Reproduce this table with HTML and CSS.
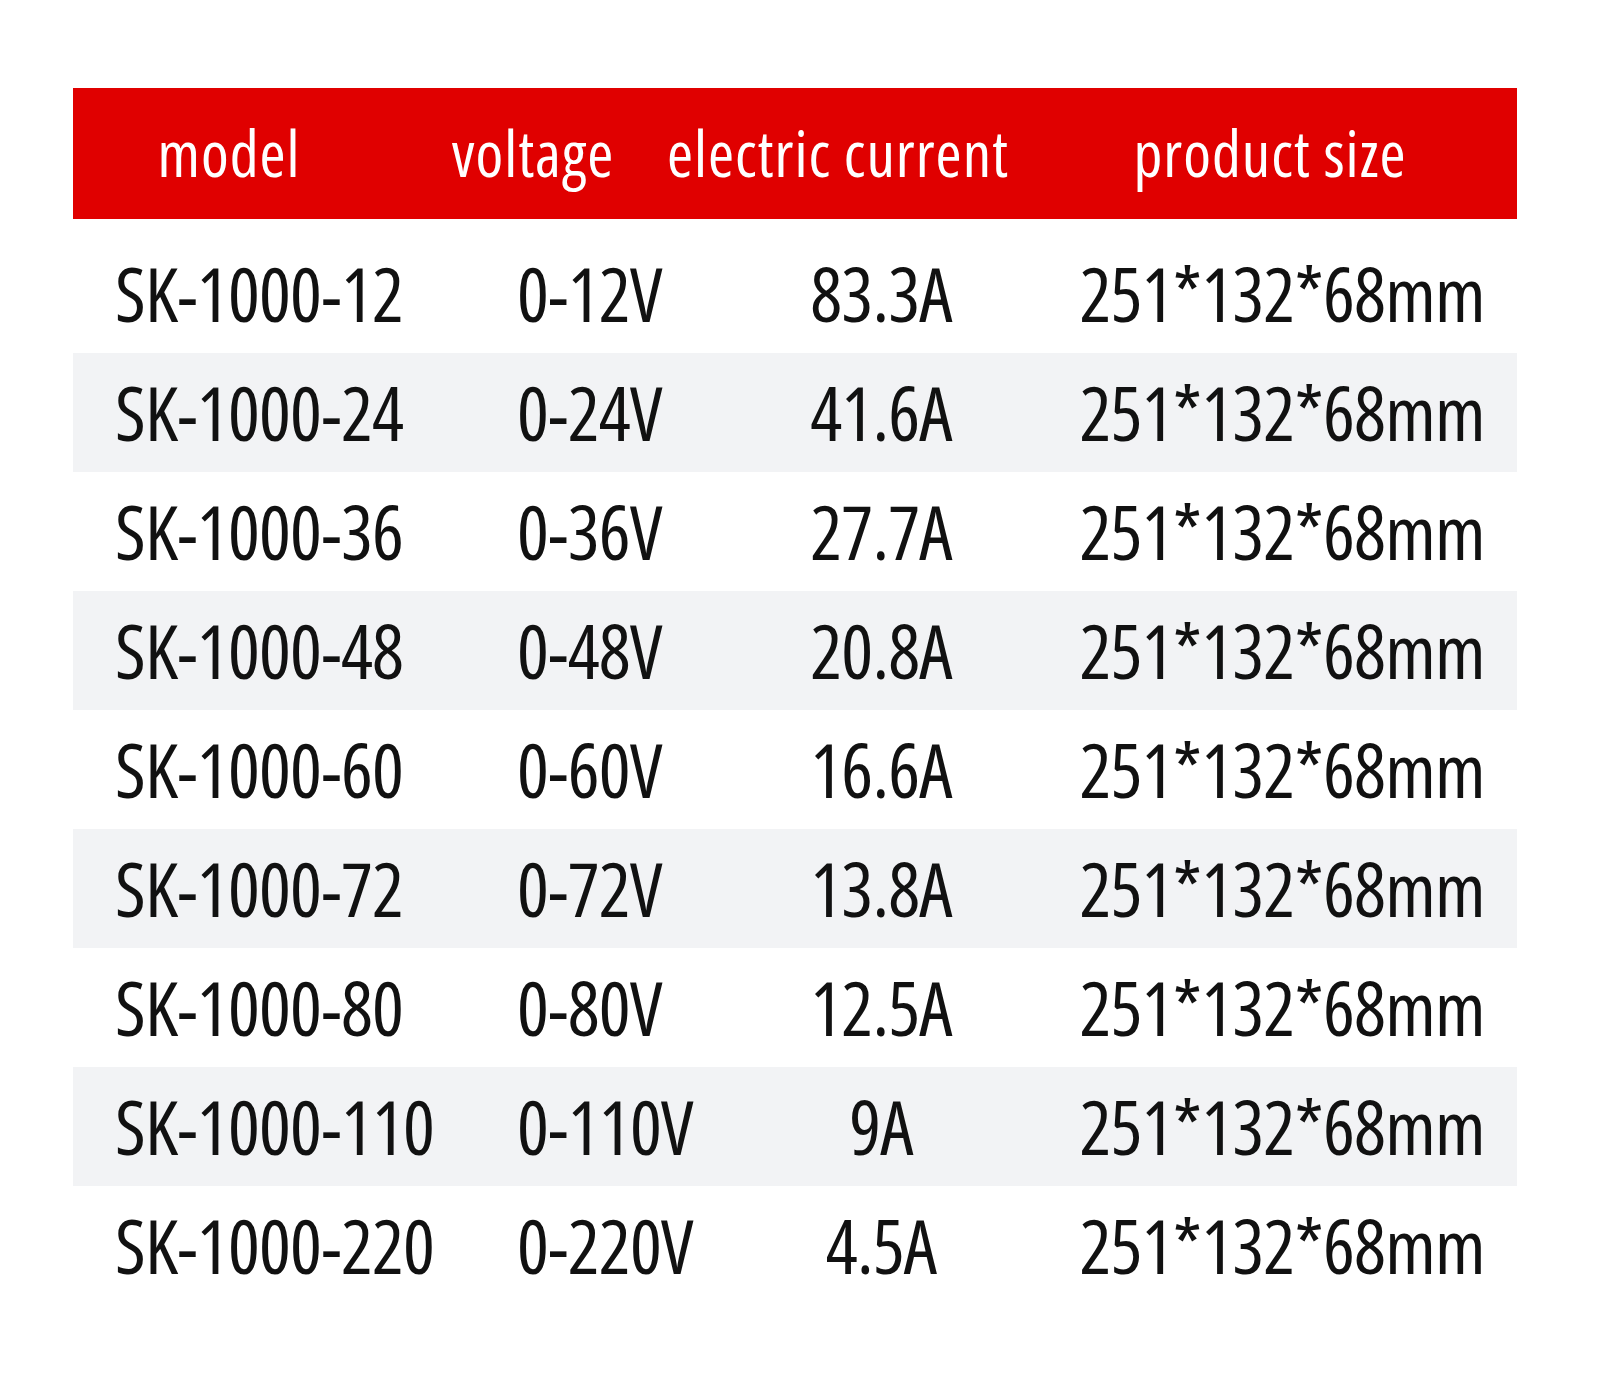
FILE: index.html
```html
<!DOCTYPE html>
<html>
<head>
<meta charset="utf-8">
<link rel="stylesheet" href="styles.css">
</head>
<body>
<div class="spec">
  <div class="head">
    <div class="h h1">model</div>
    <div class="h h2">voltage</div>
    <div class="h h3">electric current</div>
    <div class="h h4">product size</div>
  </div>
  <div class="rows">
    <div class="row"><div class="c model">SK-1000-12</div><div class="c volt">0-12V</div><div class="c cur">83.3A</div><div class="c size">251*132*68mm</div></div>
    <div class="row alt"><div class="c model">SK-1000-24</div><div class="c volt">0-24V</div><div class="c cur">41.6A</div><div class="c size">251*132*68mm</div></div>
    <div class="row"><div class="c model">SK-1000-36</div><div class="c volt">0-36V</div><div class="c cur">27.7A</div><div class="c size">251*132*68mm</div></div>
    <div class="row alt"><div class="c model">SK-1000-48</div><div class="c volt">0-48V</div><div class="c cur">20.8A</div><div class="c size">251*132*68mm</div></div>
    <div class="row"><div class="c model">SK-1000-60</div><div class="c volt">0-60V</div><div class="c cur">16.6A</div><div class="c size">251*132*68mm</div></div>
    <div class="row alt"><div class="c model">SK-1000-72</div><div class="c volt">0-72V</div><div class="c cur">13.8A</div><div class="c size">251*132*68mm</div></div>
    <div class="row"><div class="c model">SK-1000-80</div><div class="c volt">0-80V</div><div class="c cur">12.5A</div><div class="c size">251*132*68mm</div></div>
    <div class="row alt"><div class="c model">SK-1000-110</div><div class="c volt">0-110V</div><div class="c cur">9A</div><div class="c size">251*132*68mm</div></div>
    <div class="row"><div class="c model">SK-1000-220</div><div class="c volt">0-220V</div><div class="c cur">4.5A</div><div class="c size">251*132*68mm</div></div>
  </div>
</div>
</body>
</html>
```

FILE: styles.css
```css
html, body {
  margin: 0;
  padding: 0;
  background: #ffffff;
}

body {
  font-family: "Open Sans", "Liberation Sans", sans-serif;
  font-stretch: 75%;
  color: #111111;
}

.spec {
  width: 1444px;
  margin: 88px 0 0 73px;
}

.head {
  height: 131px;
  background: #e00000;
  display: grid;
  grid-template-columns: 300px 290px 350px 504px;
  align-items: center;
}

.h {
  color: #ffffff;
  font-size: 63px;
  letter-spacing: 1px;
  line-height: 1;
  text-align: center;
  white-space: nowrap;
  padding-bottom: 2px;
}

.h1 {
  padding-left: 12px;
}

.h2 {
  padding-left: 30px;
}

.h4 {
  padding-left: 10px;
}

.rows {
  padding-top: 15px;
}

.row {
  height: 119px;
  display: grid;
  grid-template-columns: 444px 198px 332px 470px;
  align-items: center;
  font-size: 75px;
  font-weight: 500;
  letter-spacing: -0.8px;
  line-height: 1;
  white-space: nowrap;
}

.row.alt {
  background: #f2f3f5;
}

.model {
  padding-left: 42px;
}

.cur,
.size {
  text-align: center;
}
```
